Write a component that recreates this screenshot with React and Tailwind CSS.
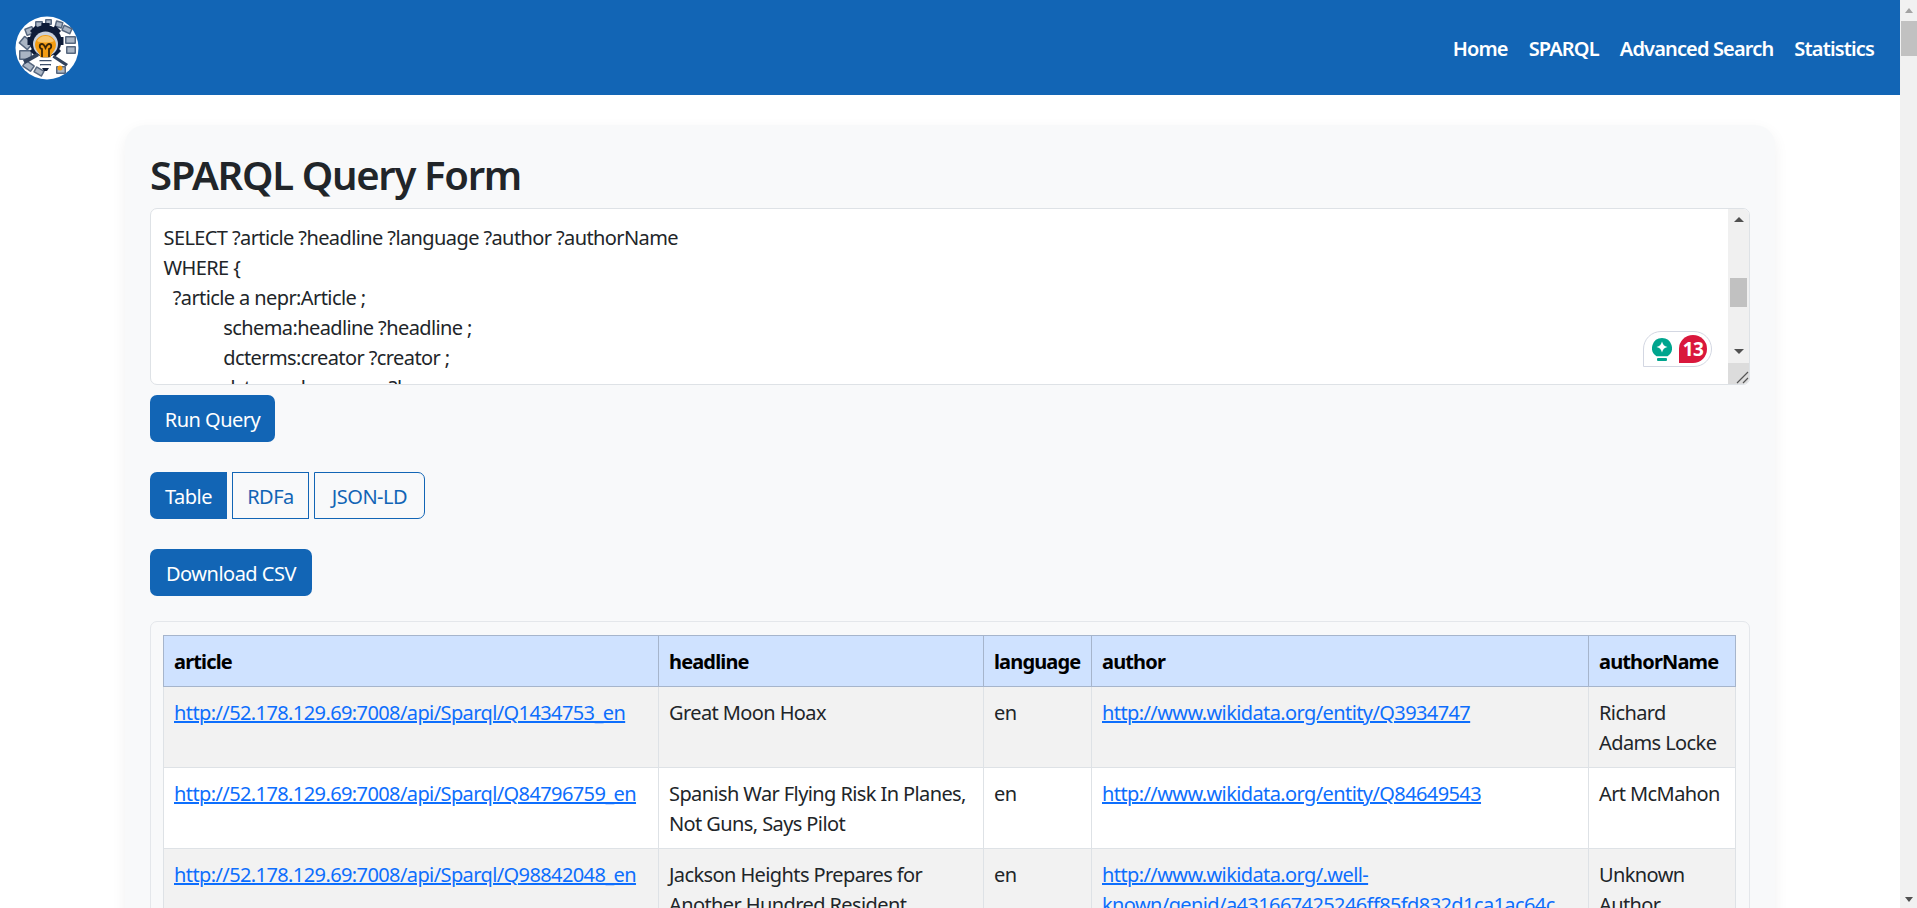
import { Fragment } from "react";

const rows = [
  {
    article: "http://52.178.129.69:7008/api/Sparql/Q1434753_en",
    headline: "Great Moon Hoax",
    author: "http://www.wikidata.org/entity/Q3934747",
    name: "Richard Adams Locke",
  },
  {
    article: "http://52.178.129.69:7008/api/Sparql/Q84796759_en",
    headline: "Spanish War Flying Risk In Planes, Not Guns, Says Pilot",
    author: "http://www.wikidata.org/entity/Q84649543",
    name: "Art McMahon",
  },
  {
    article: "http://52.178.129.69:7008/api/Sparql/Q98842048_en",
    headline: "Jackson Heights Prepares for Another Hundred Resident Families",
    author: "http://www.wikidata.org/.well-known/genid/a431667425246ff85fd832d1ca1ac64c",
    name: "Unknown Author",
  },
];

const query = `SELECT ?article ?headline ?language ?author ?authorName
WHERE {
  ?article a nepr:Article ;
             schema:headline ?headline ;
             dcterms:creator ?creator ;
             dcterms:language ?language .`;

function Logo() {
  const teeth = [0, 45, 90, 135, 180, 225, 270, 315];
  // little grey tools and papers round the gear
  const bits = [
    [10, 11, 9, 8, -20], [20, 5, 8, 7, 0], [30, 3, 7, 6, 0], [40, 5, 8, 7, 15], [47, 10, 10, 7, 25],
    [50, 20, 11, 8, 0], [51, 30, 10, 8, 0], [5, 22, 12, 10, 40], [4, 34, 13, 10, 0], [8, 46, 11, 8, 35],
    [19, 52, 10, 7, 30], [41, 50, 10, 8, 0],
  ];
  return (
    <svg width="64" height="64" viewBox="0 0 64 64" className="shrink-0">
      <circle cx="32" cy="32" r="31.500" fill="#ffffff" />
      {bits.map(([x, y, w, h, a], i) => (
        <g key={i} transform={`rotate(${a} ${x + w / 2} ${y + h / 2})`}>
          <rect x={x} y={y} width={w} height={h} rx="1" fill="#56677f" />
          <rect x={x + 1.5} y={y + 1.5} width={w - 3} height={h - 3} fill="#aab5c4" />
        </g>
      ))}
      <g fill="#0e1c38">
        {teeth.map((a) => (
          <rect key={a} x="26.500" y="7" width="8" height="9" transform={`rotate(${a} 30.500 25)`} />
        ))}
        <circle cx="30.500" cy="25" r="16" />
      </g>
      <circle cx="30.500" cy="28" r="12.500" fill="#c9d0da" />
      <path d="M30.500 19c-6 0-10.500 4.500-10.500 10 0 3.800 2.200 6.200 4 8.500.9 1.200 1 2.500 1 4h11c0-1.500.1-2.800 1-4 1.800-2.300 4-4.700 4-8.500 0-5.500-4.500-10-10.500-10z" fill="#f39c12" />
      <path d="M30.500 20c-4 0-7 2-8.500 5 3 2 14 2 17 0-1.500-3-4.500-5-8.500-5z" fill="#f8c469" />
      <path d="M27 41v-8c-3-1-3-5 0-5 2 0 2.500 2 3.500 4 1-2 1.500-4 3.500-4 3 0 3 4 0 5v8" fill="none" stroke="#3a2608" strokeWidth="1.800" />
      <rect x="24" y="41.500" width="13" height="2.500" rx="1" fill="#ffffff" />
      <rect x="24.500" y="44" width="12" height="1.500" fill="#3d4f6b" />
      <rect x="24" y="45.500" width="13" height="2.500" rx="1" fill="#ffffff" />
      <rect x="25" y="48" width="11" height="1.500" fill="#3d4f6b" />
      <rect x="25.500" y="49.500" width="10" height="2.500" rx="1" fill="#ffffff" />
      <path d="M27 52h7l-2 3h-3z" fill="#0e1c38" />
      <path d="M8 44l14-7 2 3-14 8z" fill="#31425c" />
      <path d="M53 48l-14-9-1.500 2.500 13.500 9z" fill="#31425c" />
      <circle cx="45" cy="52" r="2.500" fill="#f39c12" />
    </svg>
  );
}

function PageScrollbar() {
  return (
    <div className="w-[17px] shrink-0 h-full bg-[#f1f1f1] flex flex-col items-center">
      <div className="h-[21px] flex items-center justify-center">
        <div className="w-0 h-0 border-x-[4px] border-x-transparent border-b-[5px] border-b-[#a3a3a3]" />
      </div>
      <div className="w-[16px] ml-[1px] h-[35px] bg-[#c1c1c1]" />
      <div className="flex-1" />
      <div className="h-[17px] flex items-center justify-center">
        <div className="w-0 h-0 border-x-[4px] border-x-transparent border-t-[5px] border-t-[#505050]" />
      </div>
    </div>
  );
}

function Grammarly() {
  return (
    <div className="absolute right-[37px] bottom-[17px] w-[69px] h-[36px] bg-white border border-[#d3d7e2] rounded-[18px] rounded-bl-none flex items-center justify-between pl-[8px] pr-[4px]">
      <svg width="20" height="23" viewBox="0 0 20 23">
        <path d="M10 0a10 10 0 0 0-5.500 18.300h11A10 10 0 0 0 10 0z" fill="#00a58e" />
        <path d="M10 3.500c.8 3.200 2.300 4.700 5.500 5.500-3.200.8-4.700 2.300-5.500 5.500-.8-3.200-2.300-4.700-5.500-5.500 3.200-.8 4.700-2.300 5.500-5.500z" fill="#ffffff" />
        <rect x="5" y="20" width="10" height="3" rx="1" fill="#00a58e" />
      </svg>
      <div className="w-[28px] h-[28px] bg-[#d9173c] rounded-full rounded-bl-none flex items-center justify-center text-white text-[19px] font-bold leading-none tracking-[-0.5px]">
        13
      </div>
    </div>
  );
}

function QueryBox() {
  return (
    <div className="relative h-[177px] bg-white border border-[#dee2e6] rounded-[7px] overflow-hidden text-[#212529]">
      <pre className="font-['Noto_Sans',sans-serif] text-[20px] leading-[30px] tracking-[-0.6px] pl-[12.500px] pt-[14px] whitespace-pre">
        {query}
      </pre>
      <div className="absolute right-0 top-0 bottom-0 w-[21px] bg-[#f0f0f0] flex flex-col items-center">
        <div className="h-[21px] flex items-center justify-center">
          <div className="w-0 h-0 border-x-[5px] border-x-transparent border-b-[5px] border-b-[#505050]" />
        </div>
        <div className="mt-[48px] w-[17px] h-[29px] bg-[#c1c1c1]" />
        <div className="mt-[34px] h-[21px] flex items-center justify-center">
          <div className="w-0 h-0 border-x-[5px] border-x-transparent border-t-[5px] border-t-[#505050]" />
        </div>
        <div className="flex-1" />
        <div className="w-full h-[21px] bg-[#dcdcdc] flex items-end justify-end">
          <svg width="15" height="15" viewBox="0 0 15 15">
            <path d="M3 14L14 3M9 14l5-5" stroke="#555555" strokeWidth="1.200" />
          </svg>
        </div>
      </div>
      <Grammarly />
    </div>
  );
}

function ResultTable() {
  const td = "px-[10px] pt-[11px] pb-[9px] align-top border border-[#dee2e6]";
  return (
    <table className="w-[1572px] table-fixed border-collapse text-[20px] leading-[30px] tracking-[-0.6px]">
      <colgroup>
        <col className="w-[495px]" />
        <col className="w-[325px]" />
        <col className="w-[108px]" />
        <col className="w-[497px]" />
        <col className="w-[147px]" />
      </colgroup>
      <thead>
        <tr>
          {["article", "headline", "language", "author", "authorName"].map((h) => (
            <th key={h} className="h-[51px] px-[10px] pt-[2px] text-left font-bold text-black bg-[#cfe2ff] border border-[#a6b5cc] tracking-[-0.85px]">
              {h}
            </th>
          ))}
        </tr>
      </thead>
      <tbody>
        {rows.map((r, i) => (
          <Fragment key={r.article}>
            <tr className={i % 2 === 0 ? "bg-[#f2f2f2]" : "bg-white"}>
              <td className={`${td} h-[81px]`}>
                <a href="#" className="text-[#0d6efd] underline">{r.article}</a>
              </td>
              <td className={`${td} text-[#212529]`}>{r.headline}</td>
              <td className={`${td} text-[#212529]`}>en</td>
              <td className={`${td} break-words`}>
                <a href="#" className="text-[#0d6efd] underline">{r.author}</a>
              </td>
              <td className={`${td} text-[#212529]`}>{r.name}</td>
            </tr>
          </Fragment>
        ))}
      </tbody>
    </table>
  );
}

export default function App() {
  const btn = "h-[47px] pt-[2px] rounded-[7px] text-[20px] tracking-[-0.5px] flex items-center justify-center";
  return (
    <div className="h-[908px] overflow-hidden flex bg-white font-['Noto_Sans',sans-serif]">
      <div className="flex-1 min-w-0 h-full overflow-hidden">
        <header className="h-[95px] bg-[#1265b5] flex items-center justify-between pl-[15px] pr-[26px]">
          <Logo />
          <nav className="flex gap-[21px] text-white text-[20px] font-semibold tracking-[-0.85px] pt-[2px]">
            <a href="#">Home</a>
            <a href="#">SPARQL</a>
            <a href="#">Advanced Search</a>
            <a href="#">Statistics</a>
          </nav>
        </header>

        <main className="ml-[125px] mt-[30px] w-[1650px] bg-[#f8f9fa] rounded-[20px] shadow-[0_5px_15px_rgba(0,0,0,0.06)] px-[25px] pt-[25px] pb-[40px]">
          <h1 className="text-[40px] leading-[48px] pt-[1px] font-semibold text-[#212529] tracking-[-1.300px] mb-[9px]">
            SPARQL Query Form
          </h1>
          <QueryBox />
          <div className="mt-[10px] flex">
            <button className={`${btn} w-[125px] bg-[#1265b5] text-white`}>Run Query</button>
          </div>
          <div className="mt-[30px] flex gap-[5px]">
            <button className={`${btn} w-[77px] bg-[#1265b5] text-white rounded-r-none`}>Table</button>
            <button className={`${btn} w-[77px] border border-[#1265b5] text-[#1265b5] rounded-none`}>RDFa</button>
            <button className={`${btn} w-[111px] border border-[#1265b5] text-[#1265b5] rounded-l-none`}>JSON-LD</button>
          </div>
          <div className="mt-[30px] flex">
            <button className={`${btn} w-[162px] bg-[#1265b5] text-white`}>Download CSV</button>
          </div>
          <div className="mt-[25px] border border-[#e4e7eb] rounded-[7px] pl-[12px] pr-[14px] pt-[13px] pb-[13px]">
            <ResultTable />
          </div>
        </main>
      </div>
      <PageScrollbar />
    </div>
  );
}
